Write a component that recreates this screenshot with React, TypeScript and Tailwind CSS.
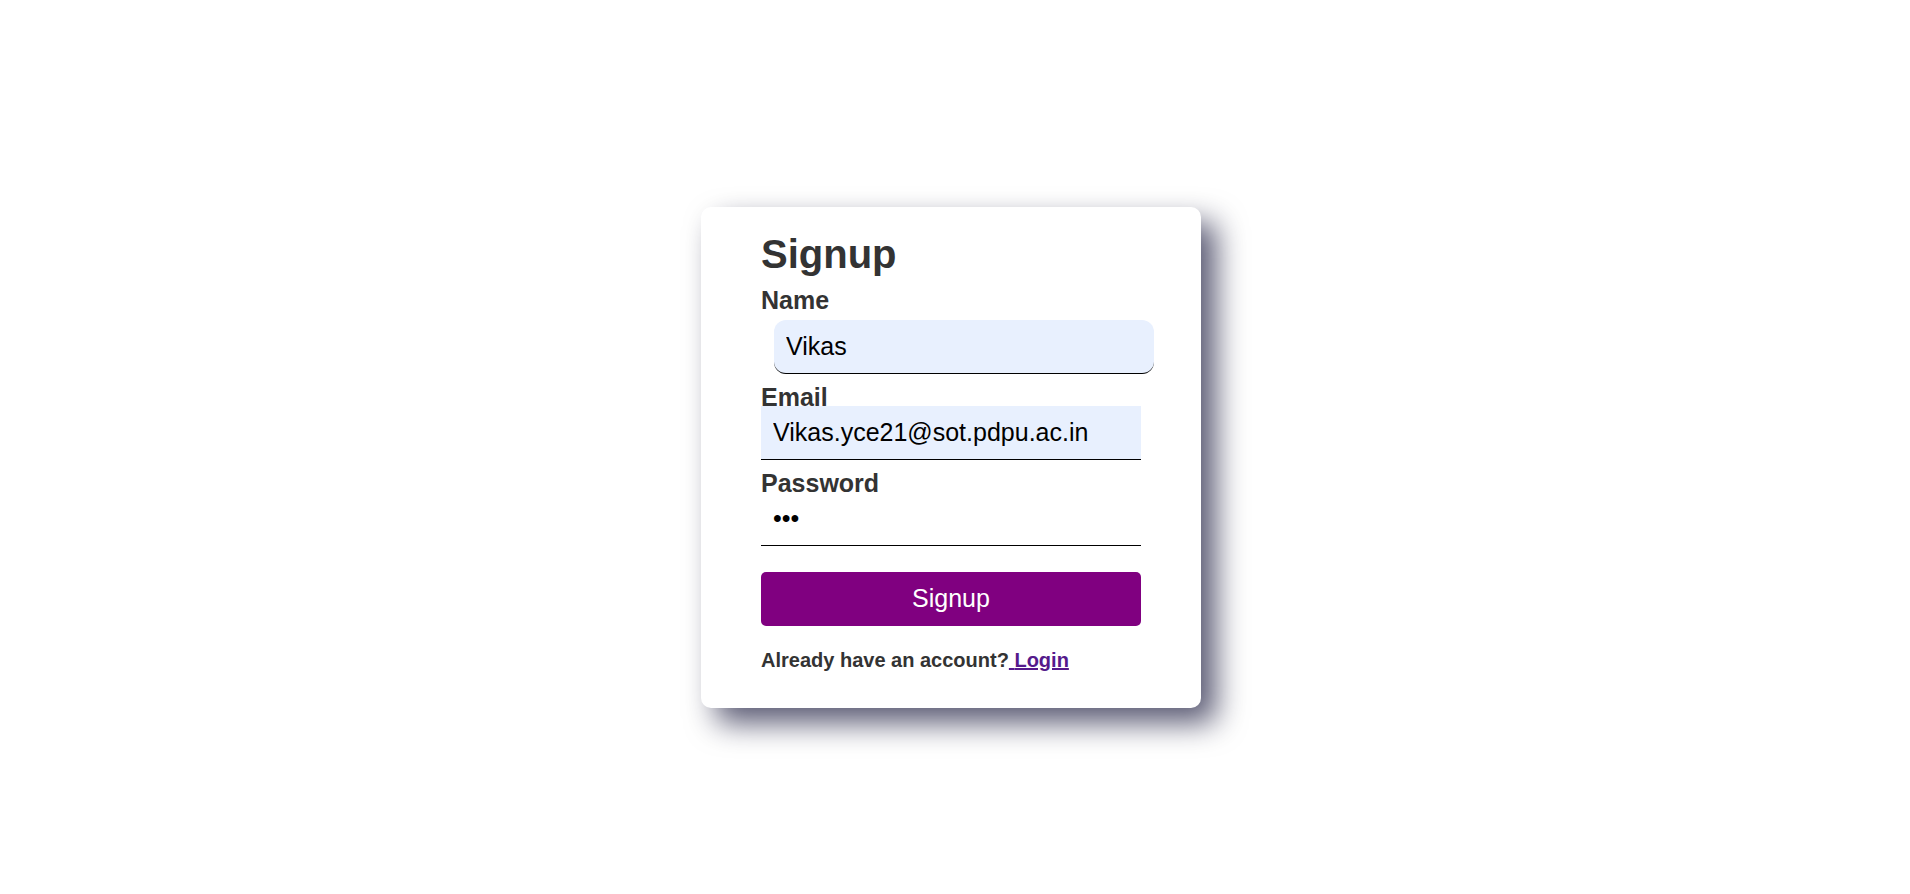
import React from "react";

const inputBase =
  "block w-[380px] px-3 text-[25px] text-black outline-none border-0 border-b border-black font-['Liberation_Sans',Arial,sans-serif]";

const Signup: React.FC = () => {
  return (
    <div className="w-[500px] h-[501px] bg-white rounded-[10px] pt-[25px] px-[60px] shadow-[15px_15px_30px_rgba(0,0,40,0.65)] text-[#333]">
      <h1 className="text-[40px] leading-[45px] font-bold">Signup</h1>
      <label className="block mt-[9px] text-[25px] leading-[28px] font-bold">Name</label>
      <input
        type="text"
        defaultValue="Vikas"
        className={`${inputBase} h-[54px] mt-[6px] ml-[13px] rounded-[12px] bg-[#e8f0fe]`}
      />
      <label className="block mt-[9px] text-[25px] leading-[28px] font-bold">Email</label>
      <input
        type="email"
        defaultValue="Vikas.yce21@sot.pdpu.ac.in"
        className={`${inputBase} relative h-[54px] -mt-[5px] bg-[#e8f0fe]`}
      />
      <label className="block mt-[9px] text-[25px] leading-[28px] font-bold">Password</label>
      <input
        type="password"
        defaultValue="abc"
        className={`${inputBase} relative h-[54px] -mt-[5px] bg-transparent`}
      />
      <button className="block w-[380px] h-[54px] mt-[26px] rounded-[5px] bg-[#800080] text-white text-[25px]">
        Signup
      </button>
      <p className="mt-[22px] text-[20px] leading-[24px] font-bold">
        Already have an account?
        <a href="#" className="text-[#551a8b] underline">
          {" "}Login
        </a>
      </p>
    </div>
  );
};

export default function App() {
  return (
    <div className="h-screen w-full bg-white flex items-center justify-center pt-[20px] pr-[8px] font-['Liberation_Sans',Arial,sans-serif]">
      <Signup />
    </div>
  );
}
